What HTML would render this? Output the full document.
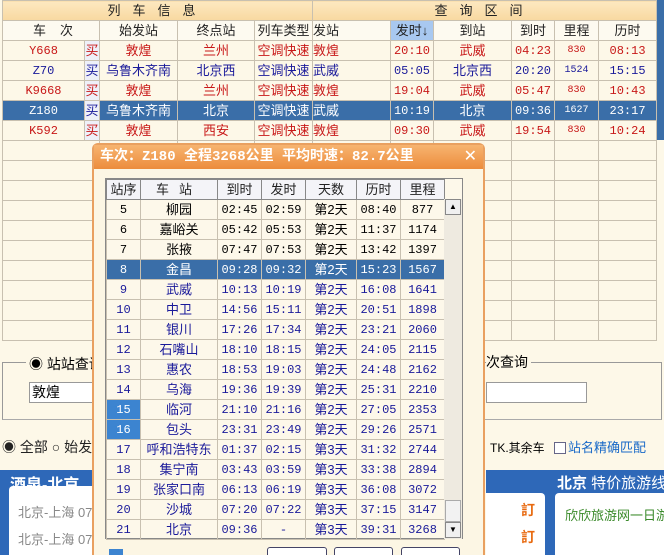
<!DOCTYPE html>
<html><head><meta charset="utf-8"><style>
*{margin:0;padding:0;box-sizing:border-box}
html,body{width:664px;height:555px;overflow:hidden}
body{background:#fdf8e8;font-family:"Liberation Sans","Noto Sans CJK SC",sans-serif;font-size:13px;position:relative}
.a{position:absolute;white-space:nowrap}
table{border-collapse:collapse;table-layout:fixed}
td{border:1px solid #c8c0b0;text-align:center;white-space:nowrap;overflow:hidden;padding:0;height:20px;line-height:18px}
.m{font-family:"Liberation Mono","Noto Sans CJK SC",monospace;font-size:12px}
.r td{color:#c81818}.b td{color:#1a1a9a}
.sel td{background:#3a6ea8;color:#fff}
.hd td{background:linear-gradient(#fde8c0,#f8d8a0);color:#222}
.h2 td{background:#fdfaf0;color:#222}
.buy{color:#1a1a9a;background:#eef0f8;border-left:1px solid #99a;}
#dlg{left:92px;top:143px;width:393px;height:412px;background:#fcf6e4;border:2px solid #e9a060;border-bottom:none;border-radius:6px 6px 0 0}
#dt{height:24px;background:linear-gradient(#f7b470,#ec8c3c);color:#fff;font-weight:bold;font-size:14px;line-height:24px;padding-left:6px;font-family:"Liberation Mono","Noto Sans CJK SC",monospace}
.dtab td{height:20px;border-color:#c8c0b0}
.dtab .hh td{background:#f4f4f8;color:#222;border-color:#888}
.dtab tr.bl td{color:#1a1a9a}
.hl{background:#3c84d0 !important;color:#fff !important}
</style></head><body>
<div class="a" style="left:2px;top:0">
<table style="width:654px">
<colgroup><col style="width:82px"><col style="width:15px"><col style="width:78px"><col style="width:77px"><col style="width:58px"><col style="width:78px"><col style="width:43px"><col style="width:78px"><col style="width:43px"><col style="width:44px"><col style="width:58px"></colgroup>
<tr class="hd"><td colspan="5" style="letter-spacing:12px">列车信息</td><td colspan="6" style="letter-spacing:12px">查询区间</td></tr>
<tr class="h2"><td colspan="2" style="letter-spacing:14px;text-align:left;padding-left:30px">车次</td><td>始发站</td><td>终点站</td><td>列车类型</td><td style="text-align:left">发站</td><td style="background:#a8c8f0">发时↓</td><td>到站</td><td>到时</td><td>里程</td><td>历时</td></tr>
<tr class="r"><td class="m">Y668</td><td class="buy">买</td><td>敦煌</td><td>兰州</td><td>空调快速</td><td style="text-align:left">敦煌</td><td class="m">20:10</td><td>武威</td><td class="m">04:23</td><td class="m" style="font-size:10px">830</td><td class="m">08:13</td></tr>
<tr class="b"><td class="m">Z70</td><td class="buy">买</td><td>乌鲁木齐南</td><td>北京西</td><td>空调快速</td><td style="text-align:left">武威</td><td class="m">05:05</td><td>北京西</td><td class="m">20:20</td><td class="m" style="font-size:10px">1524</td><td class="m">15:15</td></tr>
<tr class="r"><td class="m">K9668</td><td class="buy">买</td><td>敦煌</td><td>兰州</td><td>空调快速</td><td style="text-align:left">敦煌</td><td class="m">19:04</td><td>武威</td><td class="m">05:47</td><td class="m" style="font-size:10px">830</td><td class="m">10:43</td></tr>
<tr class="sel"><td class="m">Z180</td><td class="buy" style="background:#eef0f8;color:#1a1a9a">买</td><td>乌鲁木齐南</td><td>北京</td><td>空调快速</td><td style="text-align:left">武威</td><td class="m">10:19</td><td>北京</td><td class="m">09:36</td><td class="m" style="font-size:10px">1627</td><td class="m">23:17</td></tr>
<tr class="r"><td class="m">K592</td><td class="buy">买</td><td>敦煌</td><td>西安</td><td>空调快速</td><td style="text-align:left">敦煌</td><td class="m">09:30</td><td>武威</td><td class="m">19:54</td><td class="m" style="font-size:10px">830</td><td class="m">10:24</td></tr>
<tr><td colspan="2"></td><td></td><td></td><td></td><td></td><td></td><td></td><td></td><td></td><td></td></tr>
<tr><td colspan="2"></td><td></td><td></td><td></td><td></td><td></td><td></td><td></td><td></td><td></td></tr>
<tr><td colspan="2"></td><td></td><td></td><td></td><td></td><td></td><td></td><td></td><td></td><td></td></tr>
<tr><td colspan="2"></td><td></td><td></td><td></td><td></td><td></td><td></td><td></td><td></td><td></td></tr>
<tr><td colspan="2"></td><td></td><td></td><td></td><td></td><td></td><td></td><td></td><td></td><td></td></tr>
<tr><td colspan="2"></td><td></td><td></td><td></td><td></td><td></td><td></td><td></td><td></td><td></td></tr>
<tr><td colspan="2"></td><td></td><td></td><td></td><td></td><td></td><td></td><td></td><td></td><td></td></tr>
<tr><td colspan="2"></td><td></td><td></td><td></td><td></td><td></td><td></td><td></td><td></td><td></td></tr>
<tr><td colspan="2"></td><td></td><td></td><td></td><td></td><td></td><td></td><td></td><td></td><td></td></tr>
<tr><td colspan="2"></td><td></td><td></td><td></td><td></td><td></td><td></td><td></td><td></td><td></td></tr>
</table></div>
<div class="a" style="left:657px;top:0;width:7px;height:140px;background:#3a6ea8"></div>
<div class="a" style="left:2px;top:362px;width:660px;height:58px;border:1px solid #999;border-bottom-color:#aaa"></div>
<div class="a" style="left:26px;top:354px;background:#fdf8e8;padding:0 3px;font-size:14px">◉ 站站查询</div>
<div class="a" style="left:29px;top:382px;width:70px;height:21px;border:1px solid #999;background:#fff;font-size:14px;padding-left:2px;line-height:19px">敦煌</div>
<div class="a" style="left:486px;top:352px;font-size:14px;background:#fdf8e8;padding-right:3px">次查询</div>
<div class="a" style="left:486px;top:382px;width:101px;height:21px;border:1px solid #999;background:#fff"></div>
<div class="a" style="left:466px;top:351px;width:15px;height:25px;border:1px solid #557;border-radius:3px;background:#eef;color:#1a1a9a;text-align:center;line-height:23px">&gt;</div>
<div class="a" style="left:2px;top:437px;font-size:14px;color:#222">◉ 全部 ○ 始发</div>
<div class="a" style="left:490px;top:437px;font-size:12px">TK.其余车 <span style="display:inline-block;width:12px;height:12px;border:1px solid #668;background:#fff;vertical-align:-2px;margin:0 2px 0 6px"></span><span style="color:#1a6ac8;font-size:13px">站名精确匹配</span></div>
<div class="a" style="left:0;top:470px;width:95px;height:85px;background:#2e68b8"></div>
<div class="a" style="left:9px;top:486px;width:86px;height:69px;background:#fff;border-radius:4px 0 0 0"></div>
<div class="a" style="left:10px;top:471px;color:#fff;font-weight:bold;font-size:16px">酒泉-北京</div>
<div class="a" style="left:18px;top:502px;color:#888;font-size:13px">北京-上海 07</div>
<div class="a" style="left:18px;top:529px;color:#888;font-size:13px">北京-上海 07</div>
<div class="a" style="left:486px;top:470px;width:178px;height:85px;background:#2e68b8"></div>
<div class="a" style="left:486px;top:493px;width:59px;height:62px;background:#fff;border-radius:0 4px 0 0"></div>
<div class="a" style="left:555px;top:493px;width:109px;height:62px;background:#fff;border-radius:4px 0 0 0;overflow:hidden"></div>
<div class="a" style="left:557px;top:472px;color:#fff;font-size:15px"><b>北京</b> 特价旅游线</div>
<div class="a" style="left:565px;top:505px;color:#3a8a2a;font-size:13px">欣欣旅游网一日游</div>
<div class="a" style="left:521px;top:500px;color:#e86a10;font-weight:bold;font-size:14px">訂</div>
<div class="a" style="left:521px;top:527px;color:#e86a10;font-weight:bold;font-size:14px">訂</div>
<div class="a" id="dlg">
<div id="dt">车次：Z180 全程3268公里 平均时速：82.7公里<span style="position:absolute;right:6px;top:0;font-weight:normal;font-size:16px">✕</span></div>
<div class="a" style="left:11px;top:33px;width:358px;height:361px;border:1px solid #888;background:#fdf8ea"></div>
<div class="a" style="left:12px;top:34px">
<table class="dtab" style="width:338px">
<colgroup><col style="width:34px"><col style="width:77px"><col style="width:44px"><col style="width:44px"><col style="width:51px"><col style="width:44px"><col style="width:44px"></colgroup>
<tr class="hh"><td>站序</td><td style="letter-spacing:10px">车站</td><td>到时</td><td>发时</td><td>天数</td><td>历时</td><td>里程</td></tr>
<tr><td class="m">5</td><td>柳园</td><td class="m">02:45</td><td class="m">02:59</td><td>第2天</td><td class="m">08:40</td><td class="m">877</td></tr>
<tr><td class="m">6</td><td>嘉峪关</td><td class="m">05:42</td><td class="m">05:53</td><td>第2天</td><td class="m">11:37</td><td class="m">1174</td></tr>
<tr><td class="m">7</td><td>张掖</td><td class="m">07:47</td><td class="m">07:53</td><td>第2天</td><td class="m">13:42</td><td class="m">1397</td></tr>
<tr class="sel"><td class="m">8</td><td>金昌</td><td class="m">09:28</td><td class="m">09:32</td><td>第2天</td><td class="m">15:23</td><td class="m">1567</td></tr>
<tr class="bl"><td class="m">9</td><td>武威</td><td class="m">10:13</td><td class="m">10:19</td><td>第2天</td><td class="m">16:08</td><td class="m">1641</td></tr>
<tr class="bl"><td class="m">10</td><td>中卫</td><td class="m">14:56</td><td class="m">15:11</td><td>第2天</td><td class="m">20:51</td><td class="m">1898</td></tr>
<tr class="bl"><td class="m">11</td><td>银川</td><td class="m">17:26</td><td class="m">17:34</td><td>第2天</td><td class="m">23:21</td><td class="m">2060</td></tr>
<tr class="bl"><td class="m">12</td><td>石嘴山</td><td class="m">18:10</td><td class="m">18:15</td><td>第2天</td><td class="m">24:05</td><td class="m">2115</td></tr>
<tr class="bl"><td class="m">13</td><td>惠农</td><td class="m">18:53</td><td class="m">19:03</td><td>第2天</td><td class="m">24:48</td><td class="m">2162</td></tr>
<tr class="bl"><td class="m">14</td><td>乌海</td><td class="m">19:36</td><td class="m">19:39</td><td>第2天</td><td class="m">25:31</td><td class="m">2210</td></tr>
<tr class="bl"><td class="m hl">15</td><td>临河</td><td class="m">21:10</td><td class="m">21:16</td><td>第2天</td><td class="m">27:05</td><td class="m">2353</td></tr>
<tr class="bl"><td class="m hl">16</td><td>包头</td><td class="m">23:31</td><td class="m">23:49</td><td>第2天</td><td class="m">29:26</td><td class="m">2571</td></tr>
<tr class="bl"><td class="m">17</td><td>呼和浩特东</td><td class="m">01:37</td><td class="m">02:15</td><td>第3天</td><td class="m">31:32</td><td class="m">2744</td></tr>
<tr class="bl"><td class="m">18</td><td>集宁南</td><td class="m">03:43</td><td class="m">03:59</td><td>第3天</td><td class="m">33:38</td><td class="m">2894</td></tr>
<tr class="bl"><td class="m">19</td><td>张家口南</td><td class="m">06:13</td><td class="m">06:19</td><td>第3天</td><td class="m">36:08</td><td class="m">3072</td></tr>
<tr class="bl"><td class="m">20</td><td>沙城</td><td class="m">07:20</td><td class="m">07:22</td><td>第3天</td><td class="m">37:15</td><td class="m">3147</td></tr>
<tr class="bl"><td class="m">21</td><td>北京</td><td class="m">09:36</td><td class="m">-</td><td>第3天</td><td class="m">39:31</td><td class="m">3268</td></tr>
</table></div>
<div class="a" style="left:350px;top:54px;width:18px;height:340px;background:#eeeae0"></div>
<div class="a" style="left:351px;top:54px;width:16px;height:16px;border:1px solid #888;background:#f0f0f0;font-size:8px;text-align:center;line-height:14px">▲</div>
<div class="a" style="left:351px;top:355px;width:16px;height:22px;border:1px solid #aaa;background:#f2f2f2"></div>
<div class="a" style="left:351px;top:377px;width:16px;height:16px;border:1px solid #888;background:#f0f0f0;font-size:8px;text-align:center;line-height:14px">▼</div>
<div class="a" style="left:15px;top:404px;width:14px;height:14px;background:#3c84d0"></div>
<div class="a" style="left:173px;top:402px;width:60px;height:20px;border:1px solid #446;border-radius:3px;background:#fff"></div>
<div class="a" style="left:240px;top:402px;width:59px;height:20px;border:1px solid #446;border-radius:3px;background:#fff"></div>
<div class="a" style="left:307px;top:402px;width:59px;height:20px;border:1px solid #446;border-radius:3px;background:#fff"></div>
</div>
</body></html>
